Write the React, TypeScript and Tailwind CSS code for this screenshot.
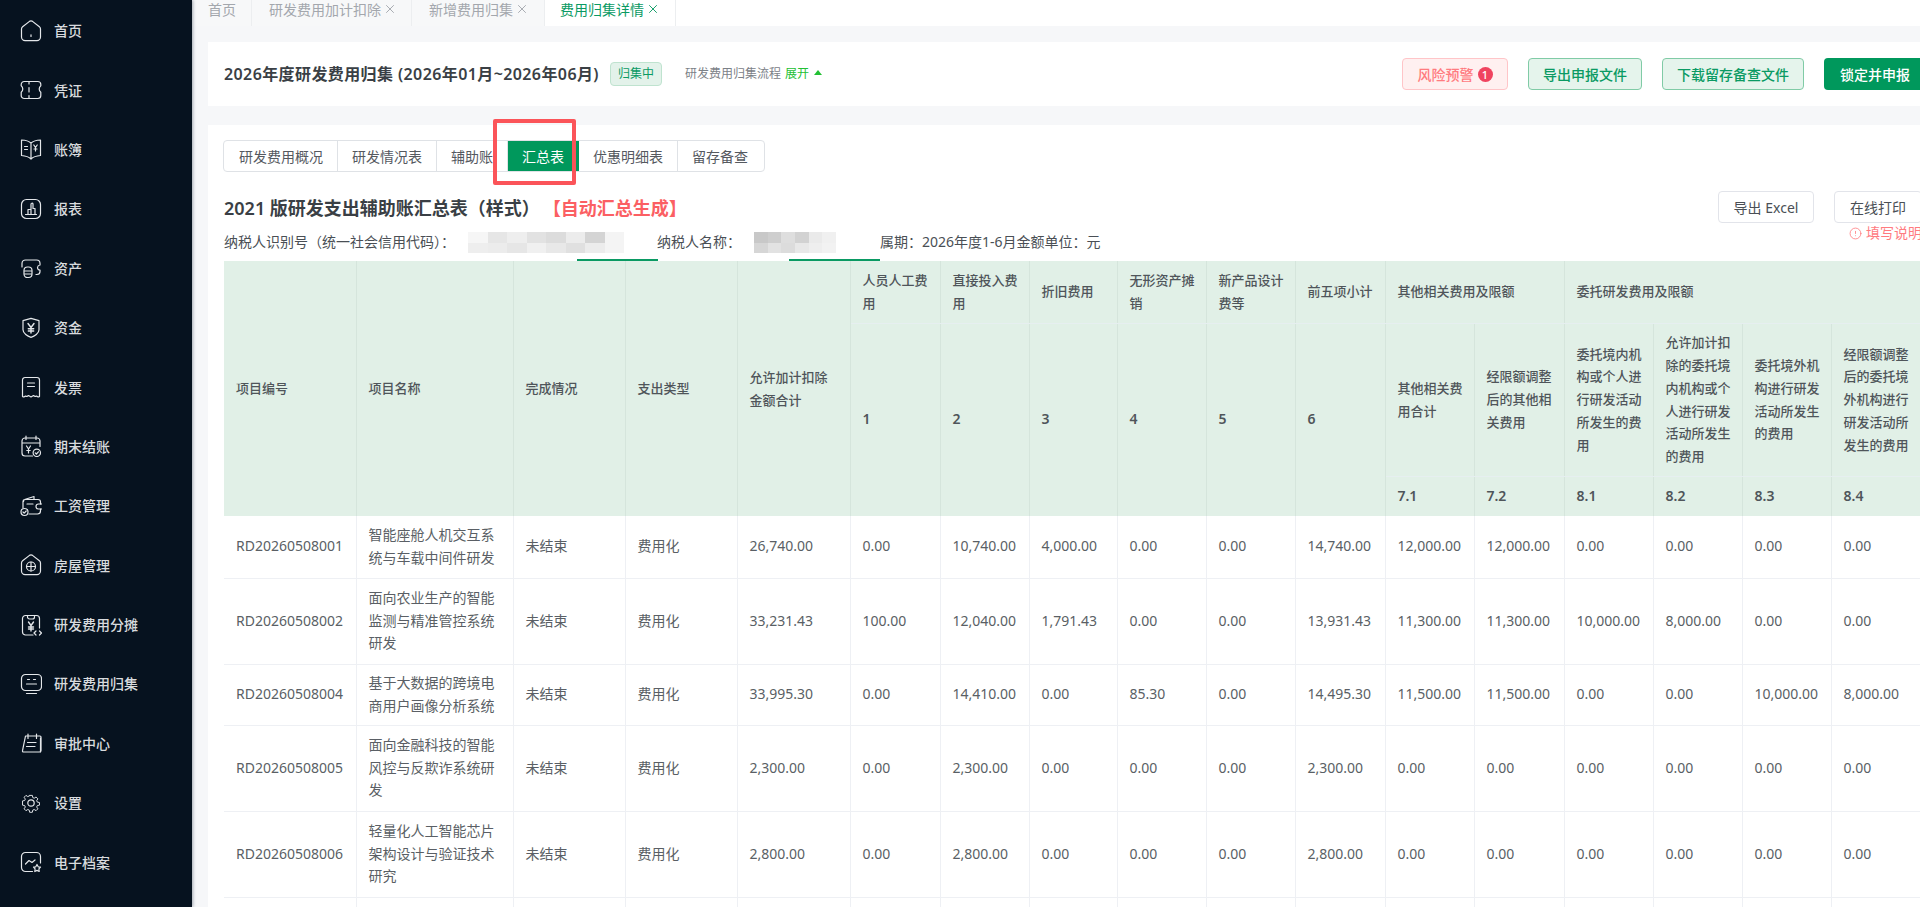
import React from 'react';
import { CircleAlert, X } from 'lucide-react';

const iconProps = {
  width: 22,
  height: 22,
  viewBox: '0 0 22 22',
  fill: 'none',
  stroke: '#e4e7ea',
  strokeWidth: 1.2,
  strokeLinecap: 'round' as const,
  strokeLinejoin: 'round' as const,
};

const navIcons: React.ReactNode[] = [
  <path key="0" d="M9.2 1.6a3 3 0 0 1 3.6 0l6.6 5.2a3 3 0 0 1 1.1 2.3V17a3.6 3.6 0 0 1-3.6 3.6H5.1A3.6 3.6 0 0 1 1.5 17V9.1a3 3 0 0 1 1.1-2.3zM11 14.8v1.6" />,
  <path key="1" d="M4.2 2.5h13.6a3 3 0 0 1 3 3v1.2a4.3 4.3 0 0 0-1.6 3.3c0 1.6.7 2.6 1.6 3.3v3.2a3 3 0 0 1-3 3H4.2a3 3 0 0 1-3-3v-3.2c.9-.7 1.6-1.7 1.6-3.3s-.7-2.6-1.6-3.3V5.5a3 3 0 0 1 3-3zM9 3v2M9 8.5v4.5M9 16.5V19" />,
  <>
    <path d="M11 5C9 3.2 5.5 2.2 1.5 2v15.5c4 .3 7.5 1.5 9.5 3.5 2-2 5.5-3.2 9.5-3.5V2C16.5 2.2 13 3.2 11 5zM11 5v16" />
    <path d="M4.5 8.500h3M4.500 11.500h3M13.800 7l1.700 2.500L17.200 7M15.500 9.500v3.500M14 11h3" />
  </>,
  <>
    <rect x="1.500" y="1.500" width="19" height="19" rx="5" />
    <path d="M5.500 16.500h11M8 16.500v-5h3M11 16.500V6.500a1 1 0 0 1 2-.5v4.500h2v6" />
  </>,
  <>
    <path d="M2 10V6.500a3.500 3.500 0 0 1 3.500-3.500h11A3.500 3.500 0 0 1 20 6.500v1.500a2.800 2.800 0 0 0-2.500 2.500c0 1.500 1.100 2.500 2.500 2.500v1.500a3 3 0 0 1-3 3h-1" />
    <rect x="4" y="10" width="8" height="10.500" rx="3.500" />
    <path d="M4.500 14h7M4.500 17h7" />
  </>,
  <>
    <path d="M11 1.500l8 2.300v9.200c0 3.500-4.500 6.500-8 7.500-3.500-1-8-4-8-7.500V3.800z" transform="translate(0 -.2)" />
    <path d="M8 6.500l3 4 3-4M11 10.500V16M8.300 11.800h5.400M8.300 14h5.400" strokeWidth="1.400" />
  </>,
  <path key="6" d="M5 1.500h12a2.500 2.500 0 0 1 2.500 2.500v16.500c-1 .6-2 .6-3-.5-1 .6-2 .6-3-.5l-2.500 1.500-2.500-1.500c-1 1.100-2 1.100-3 .5-1 1.100-2 1.100-3 .5V4A2.500 2.500 0 0 1 5 1.500zM7.500 7h7M7.500 10.500h7" />,
  <>
    <path d="M20 11.500V6a3 3 0 0 0-3-3H5a3 3 0 0 0-3 3v12a3 3 0 0 0 3 3h7.500M6 1v3.500M16 1v3.500M2.500 8h17" />
    <path d="M6.500 11l2 3 2-3M8.500 14v4M6.800 15.500h3.400" />
    <circle cx="16.800" cy="17.800" r="3.700" />
    <path d="M15.200 17.800l1.200 1.200 2-2.200" />
  </>,
  <>
    <path d="M3 13V6.500a2 2 0 0 1 1.600-2L14 1.500v3M3.500 6.500a2 2 0 0 1 2-2H18a2.500 2.500 0 0 1 2.500 2.500v2M20.500 14v2a3 3 0 0 1-3 3H9" />
    <path d="M21.500 9h-3a2.500 2.500 0 0 0 0 5h3M7 9h6" />
    <circle cx="4.500" cy="17" r="3.500" />
    <path d="M3 17l1.200 1.200 2-2.200" />
  </>,
  <>
    <path d="M9.200 1.600a3 3 0 0 1 3.600 0l6.600 5.200a3 3 0 0 1 1.100 2.300V17a3.600 3.600 0 0 1-3.600 3.600H5.100A3.600 3.600 0 0 1 1.500 17V9.100a3 3 0 0 1 1.100-2.300z" />
    <circle cx="11" cy="12.500" r="4.500" />
    <path d="M6.500 12.500h9M11 8v9" />
  </>,
  <>
    <path d="M13 21H5.500a3 3 0 0 1-3-3V4.500a3 3 0 0 1 3-3h11a3 3 0 0 1 3 3V14M7.500 1.500V3a2 2 0 0 0 2 2h3a2 2 0 0 0 2-2V1.500" />
    <path d="M8.500 8l2.500 3.500L13.500 8M11 11.500V17M8.500 13h5M8.500 15h5" strokeWidth="1.400" />
    <path d="M16 17l-2 2 2 2M19.500 17l2 2-2 2" />
  </>,
  <>
    <rect x="1.500" y="1.500" width="20" height="16" rx="4" />
    <path d="M7.500 6.500h2M13.500 6.500h2M6.500 11h10M6.500 20.500h10" />
  </>,
  <>
    <path d="M4.500 4.500h14.500a1 1 0 0 1 1 1V19a1.500 1.500 0 0 1-1.500 1.500H2.500a1 1 0 0 1-1-1.300z" transform="translate(1 -.5)" />
    <path d="M8 2v4.500M16.500 2v4.500M7.500 10.500h8.500M6.500 14.500h8.500M20.500 6v14" />
  </>,
  <>
    <path d="M9.300 1.500h3.400l.5 2.700 1.800.8 2.300-1.500 2.300 2.300-1.500 2.300.8 1.800 2.700.5v3.300l-2.700.5-.8 1.800 1.500 2.300-2.300 2.300-2.300-1.500-1.800.8-.5 2.700H9.300l-.5-2.700-1.800-.8-2.300 1.500-2.300-2.300 1.500-2.300-.8-1.800-2.700-.5V8.400l2.700-.5.800-1.800-1.500-2.300 2.300-2.300L7 3l1.800-.8z" transform="translate(2.200 2.200) scale(.8)" />
    <circle cx="11" cy="11" r="3.200" />
  </>,
  <>
    <path d="M12.500 20.500H5.500a4 4 0 0 1-4-4v-11a4 4 0 0 1 4-4h11a4 4 0 0 1 4 4V12" />
    <path d="M5.500 13l3.500-3.500 3 2 3-2.500" />
    <path d="M17 13.500l1.200 2.300 2.300.4-1.600 1.700.3 2.600-2.200-1.100-2.200 1.100.3-2.600-1.600-1.700 2.300-.4z" />
  </>,
];

const navItems = ['首页', '凭证', '账簿', '报表', '资产', '资金', '发票', '期末结账', '工资管理', '房屋管理', '研发费用分摊', '研发费用归集', '审批中心', '设置', '电子档案'];

const pageTabs = [
  { label: '研发费用加计扣除', width: 'w-[160px]' },
  { label: '新增费用归集', width: 'w-[133px]' },
];

const subTabs = ['研发费用概况', '研发情况表', '辅助账', '汇总表', '优惠明细表', '留存备查'];

const colWidths = ['w-[132px]', 'w-[157px]', 'w-[112px]', 'w-[112px]', 'w-[113px]', 'w-[90px]', 'w-[89px]', 'w-[88px]', 'w-[89px]', 'w-[89px]', 'w-[90px]', 'w-[89px]', 'w-[90px]', 'w-[89px]', 'w-[89px]', 'w-[89px]', 'w-[89px]'];

const rows = [
  { id: 'RD20260508001', name: '智能座舱人机交互系统与车载中间件研发', h: 'h-[62px]', nums: ['26,740.00', '0.00', '10,740.00', '4,000.00', '0.00', '0.00', '14,740.00', '12,000.00', '12,000.00', '0.00', '0.00', '0.00', '0.00'] },
  { id: 'RD20260508002', name: '面向农业生产的智能监测与精准管控系统研发', h: 'h-[86px]', nums: ['33,231.43', '100.00', '12,040.00', '1,791.43', '0.00', '0.00', '13,931.43', '11,300.00', '11,300.00', '10,000.00', '8,000.00', '0.00', '0.00'] },
  { id: 'RD20260508004', name: '基于大数据的跨境电商用户画像分析系统', h: 'h-[61px]', nums: ['33,995.30', '0.00', '14,410.00', '0.00', '85.30', '0.00', '14,495.30', '11,500.00', '11,500.00', '0.00', '0.00', '10,000.00', '8,000.00'] },
  { id: 'RD20260508005', name: '面向金融科技的智能风控与反欺诈系统研发', h: 'h-[86px]', nums: ['2,300.00', '0.00', '2,300.00', '0.00', '0.00', '0.00', '2,300.00', '0.00', '0.00', '0.00', '0.00', '0.00', '0.00'] },
  { id: 'RD20260508006', name: '轻量化人工智能芯片架构设计与验证技术研究', h: 'h-[86px]', nums: ['2,800.00', '0.00', '2,800.00', '0.00', '0.00', '0.00', '2,800.00', '0.00', '0.00', '0.00', '0.00', '0.00', '0.00'] },
];

// pixelated patches that hide the taxpayer id and name
const mosaicA = ['#f6f6f6', '#e6e6e6', '#eeeeee', '#e2e2e2', '#dcdcdc', '#ececec', '#d4d4d4', '#f4f4f4', '#eeeeee', '#ececec', '#e6e6e6', '#f0f0f0', '#e8e8e8', '#e0e0e0', '#ececec', '#f4f4f4'];
const mosaicB = ['#c8c8c8', '#cecece', '#dedede', '#d2d2d2', '#eaeaea', '#f0f0f0', '#d6d6d6', '#e2e2e2', '#dcdcdc', '#e8e8e8', '#eeeeee', '#f2f2f2'];

function Mosaic({ shades, className }: { shades: string[]; className: string }) {
  return (
    <div className={`grid grid-rows-2 shrink-0 ${className}`}>
      {shades.map((c, i) => (
        <div key={i} style={{ backgroundColor: c }} />
      ))}
    </div>
  );
}

const headCell = 'pl-3 pr-[10px] py-[7px] border-r border-[#d5e5dc] align-middle text-left font-medium';
const headNum = 'pl-3 pr-[10px] py-[7px] border-r border-[#d5e5dc] align-middle text-left font-semibold text-[14px]';
const bodyCell = 'pl-3 pr-[10px] py-[7px] border-r border-b border-[#eef0f4] align-middle text-left font-normal';

export default function App() {
  return (
    <div className="w-screen h-screen flex overflow-hidden bg-[#f6f7f9] text-[14px] text-[#4a4f55] font-['Noto_Sans','Noto_Sans_CJK_SC',sans-serif]">
      {/* Sidebar */}
      <aside className="w-[192px] shrink-0 h-full bg-[#06121f] pt-[1px] shadow-[1px_0_3px_rgba(60,70,90,0.45)] z-10">
        {navItems.map((label, i) => (
          <div key={label} className="h-[59.4px] flex items-center pl-[20px] gap-[12px] text-[#d8dbde] font-medium">
            <svg {...iconProps} className="shrink-0">{navIcons[i]}</svg>
            <span>{label}</span>
          </div>
        ))}
      </aside>

      <main className="flex-1 min-w-0 overflow-hidden">
        {/* Page tabs */}
        <div className="h-[26px] bg-white flex text-[#a3a7ad]">
          <div className="w-[60px] bg-[#f7f8f9] border-r border-[#eceef0] pl-[16px] pb-[8px] flex items-center">首页</div>
          {pageTabs.map((t) => (
            <div key={t.label} className={`${t.width} bg-[#f7f8f9] border-r border-[#eceef0] pl-[17px] pb-[8px] flex items-center gap-[2px]`}>
              <span className="whitespace-nowrap">{t.label}</span>
              <X size={14} strokeWidth={1.6} />
            </div>
          ))}
          <div className="w-[131px] border-r border-[#eceef0] pl-[15px] pb-[8px] flex items-center gap-[2px] text-[#0a9a63]">
            <span className="whitespace-nowrap">费用归集详情</span>
            <X size={14} strokeWidth={1.6} />
          </div>
        </div>

        {/* Title card */}
        <section className="ml-[16px] mt-[16px] w-[1734px] h-[64px] bg-white px-[16px] flex items-center justify-between">
          <div className="flex items-center">
            <h1 className="text-[16px] font-semibold tracking-[0.4px] text-[#3a3f45] whitespace-nowrap">2026年度研发费用归集 (2026年01月~2026年06月)</h1>
            <span className="ml-[11px] h-[24px] px-[7px] flex items-center rounded-[4px] bg-[#e3f2ea] border border-[#bfe3cf] text-[12px] text-[#0a9a63]">归集中</span>
            <span className="ml-[23px] text-[12px] text-[#7c8187]">研发费用归集流程</span>
            <span className="ml-[4px] text-[12px] text-[#22c033]">展开</span>
            <span className="ml-[5px] mb-[3px] w-0 h-0 border-x-[4px] border-x-transparent border-b-[5px] border-b-[#22c033]" />
          </div>
          <div className="flex items-center gap-[20px] font-medium">
            <button className="h-[32px] w-[106px] flex items-center justify-center gap-[4px] rounded-[4px] border border-[#ffc5c8] bg-[#fff0f0] text-[#ff7b7f]">
              风险预警
              <span className="w-[15px] h-[15px] rounded-full bg-[#f0435f] text-white text-[11px] leading-[15px] text-center">1</span>
            </button>
            <button className="h-[32px] w-[114px] rounded-[4px] border border-[#80cba6] bg-[#e5f4ec] text-[#0a9a63]">导出申报文件</button>
            <button className="h-[32px] w-[142px] rounded-[4px] border border-[#80cba6] bg-[#e5f4ec] text-[#0a9a63]">下载留存备查文件</button>
            <button className="h-[32px] w-[102px] rounded-[4px] bg-[#00985c] text-white">锁定并申报</button>
          </div>
        </section>

        {/* Summary card */}
        <section className="relative ml-[16px] mt-[19px] w-[1734px] bg-white pt-[15px] pl-[16px] pb-[40px]">
          <div className="flex w-fit h-[32px] -ml-[1px] rounded-[4px] border border-[#dfe2e6] text-[#55595f]">
            {subTabs.map((t) => (
              <div
                key={t}
                className={`px-[14px] first:pl-[15px] last:pr-[16px] flex items-center border-r last:border-r-0 whitespace-nowrap ${t === '汇总表' ? 'bg-[#00985c] text-white border-[#00985c]' : 'border-[#dfe2e6]'}`}
              >
                {t}
              </div>
            ))}
          </div>

          {/* Annotation frame */}
          <div className="absolute left-[285px] top-[-6px] w-[83px] h-[66px] border-[4px] border-[#fb5459] rounded-[2px]" />

          <div className="mt-[19px] flex items-start justify-between pr-[20px]">
            <div className="flex items-center h-[34px] whitespace-nowrap">
              <h2 className="text-[18px] font-semibold text-[#3a3f45]">2021 版研发支出辅助账汇总表（样式）</h2>
              <span className="ml-[3px] text-[18px] font-semibold text-[#fb5f63]">【自动汇总生成】</span>
            </div>
            <div>
              <div className="flex gap-[20px]">
                <button className="h-[32px] w-[96px] rounded-[4px] border border-[#e2e4ea] bg-white">导出 Excel</button>
                <button className="h-[32px] w-[88px] rounded-[4px] border border-[#e2e4ea] bg-white">在线打印</button>
              </div>
              <div className="ml-[131px] mt-[1px] flex items-center gap-[4px] leading-[18px] text-[#ff7b7f] whitespace-nowrap">
                <CircleAlert size={13} strokeWidth={1.5} />
                填写说明
              </div>
            </div>
          </div>

          {/* Taxpayer row */}
          <div className="relative -mt-[10px] h-[29px] flex items-start leading-[20px] whitespace-nowrap">
            <span>纳税人识别号（统一社会信用代码）：</span>
            <Mosaic shades={mosaicA} className="grid-cols-8 ml-[13px] w-[156px] h-[21px]" />
            <span className="ml-[33px]">纳税人名称：</span>
            <Mosaic shades={mosaicB} className="grid-cols-6 ml-[13px] w-[82px] h-[21px]" />
            <span className="ml-[44px]">属期：2026年度1-6月金额单位：元</span>
            <div className="absolute bottom-0 left-[353px] w-[81px] h-[2px] bg-[#0a9a63]" />
            <div className="absolute bottom-0 left-[565px] w-[91px] h-[2px] bg-[#0a9a63]" />
          </div>

          <table className="table-fixed w-[1696px] border-collapse text-[13px] leading-[22.75px]">
            <colgroup>
              {colWidths.map((w, i) => (
                <col key={i} className={w} />
              ))}
            </colgroup>
            <thead className="bg-[#e1f0e7] text-[#4f555a]">
              <tr className="h-[62px]">
                {['项目编号', '项目名称', '完成情况', '支出类型', '允许加计扣除金额合计'].map((t) => (
                  <th key={t} rowSpan={3} className={headCell}>{t}</th>
                ))}
                {['人员人工费用', '直接投入费用', '折旧费用', '无形资产摊销', '新产品设计费等', '前五项小计'].map((t) => (
                  <th key={t} className={`${headCell} border-b border-b-[#e6eff0]`}>{t}</th>
                ))}
                <th colSpan={2} className={`${headCell} border-b border-b-[#e6eff0]`}>其他相关费用及限额</th>
                <th colSpan={4} className={`${headCell} border-b border-b-[#e6eff0]`}>委托研发费用及限额</th>
              </tr>
              <tr className="h-[153px]">
                {['1', '2', '3', '4', '5', '6'].map((t) => (
                  <th key={t} rowSpan={2} className={headNum}>{t}</th>
                ))}
                {[
                  '其他相关费用合计',
                  '经限额调整后的其他相关费用',
                  '委托境内机构或个人进行研发活动所发生的费用',
                  '允许加计扣除的委托境内机构或个人进行研发活动所发生的费用',
                  '委托境外机构进行研发活动所发生的费用',
                  '经限额调整后的委托境外机构进行研发活动所发生的费用',
                ].map((t) => (
                  <th key={t} className={`${headCell} border-b border-b-[#e6eff0]`}>{t}</th>
                ))}
              </tr>
              <tr className="h-[40px]">
                {['7.1', '7.2', '8.1', '8.2', '8.3', '8.4'].map((t) => (
                  <th key={t} className={headNum}>{t}</th>
                ))}
              </tr>
            </thead>
            <tbody className="text-[14px] text-[#5a5f65]">
              {rows.map((r) => (
                <tr key={r.id} className={r.h}>
                  <td className={bodyCell}>{r.id}</td>
                  <td className={bodyCell}>{r.name}</td>
                  <td className={bodyCell}>未结束</td>
                  <td className={bodyCell}>费用化</td>
                  {r.nums.map((n, i) => (
                    <td key={i} className={`${bodyCell} whitespace-nowrap`}>{n}</td>
                  ))}
                </tr>
              ))}
              <tr className="h-[62px]">
                {colWidths.map((w, i) => (
                  <td key={w + i} className={bodyCell} />
                ))}
              </tr>
            </tbody>
          </table>
        </section>
      </main>
    </div>
  );
}
